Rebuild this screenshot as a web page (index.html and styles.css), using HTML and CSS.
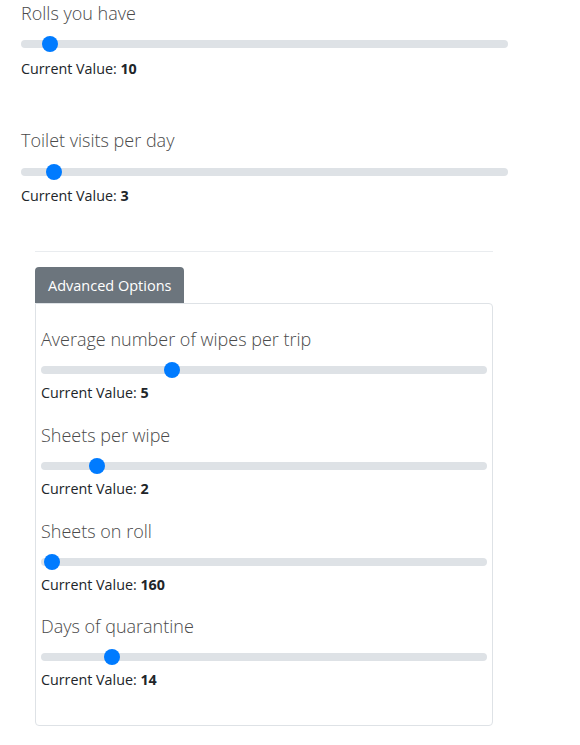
FILE: index.html
```html
<!DOCTYPE html>
<html lang="en">
<head>
<meta charset="utf-8">
<title>Toilet paper calculator</title>
<link rel="stylesheet" href="styles.css">
</head>
<body>
<main class="page">
  <section class="field field-top">
    <label class="field-label" for="rolls">Rolls you have</label>
    <input id="rolls" class="range" type="range" min="1" max="200" value="10">
    <p class="value">Current Value: <strong>10</strong></p>
  </section>
  <section class="field field-top">
    <label class="field-label" for="visits">Toilet visits per day</label>
    <input id="visits" class="range" type="range" min="1" max="39" value="3">
    <p class="value">Current Value: <strong>3</strong></p>
  </section>

  <hr class="divider">

  <div class="advanced">
    <button class="btn-adv" type="button">Advanced Options</button>
    <div class="card">
      <section class="field field-card">
        <label class="field-label" for="wipes">Average number of wipes per trip</label>
        <input id="wipes" class="range" type="range" min="1" max="15" value="5">
        <p class="value">Current Value: <strong>5</strong></p>
      </section>
      <section class="field field-card">
        <label class="field-label" for="sheets">Sheets per wipe</label>
        <input id="sheets" class="range" type="range" min="1" max="10" value="2">
        <p class="value">Current Value: <strong>2</strong></p>
      </section>
      <section class="field field-card">
        <label class="field-label" for="onroll">Sheets on roll</label>
        <input id="onroll" class="range" type="range" min="150" max="1500" value="160">
        <p class="value">Current Value: <strong>160</strong></p>
      </section>
      <section class="field field-card">
        <label class="field-label" for="days">Days of quarantine</label>
        <input id="days" class="range" type="range" min="1" max="90" value="14">
        <p class="value">Current Value: <strong>14</strong></p>
      </section>
    </div>
  </div>
</main>
</body>
</html>
```

FILE: styles.css
```css
html, body {
  margin: 0;
  padding: 0;
  background: #fff;
}

body {
  font-family: "Open Sans", "Noto Sans", "Liberation Sans", sans-serif;
  color: #212529;
}

.page {
  padding: 2px 0 0 21px;
  width: 487px;
}

.field {
  display: flex;
  flex-direction: column;
}

.field-label {
  font-size: 18px;
  font-weight: 300;
  line-height: 23px;
  color: #4a4a4a;
}

.range {
  -webkit-appearance: none;
  appearance: none;
  width: 100%;
  height: 16px;
  margin: 11px 0 0 0;
  padding: 0;
  background: transparent;
}

.range::-webkit-slider-runnable-track {
  height: 8px;
  border-radius: 4px;
  background: #dee2e6;
}

.range::-webkit-slider-thumb {
  -webkit-appearance: none;
  appearance: none;
  width: 16px;
  height: 16px;
  margin-top: -4px;
  border: 0;
  border-radius: 50%;
  background: #007bff;
}

.value {
  margin: 6px 0 0 0;
  font-size: 14.3px;
  line-height: 21px;
}

.value strong {
  font-weight: 700;
}

.field-top + .field-top {
  margin-top: 50px;
}

.field-top + .field-top .range {
  margin-top: 12px;
}

.field-top + .field-top .value {
  margin-top: 5px;
}

.divider {
  margin: 45px 0 0 14px;
  width: 458px;
  border: 0;
  border-top: 1px solid #e9ecef;
}

.advanced {
  margin: 15px 0 0 14px;
  width: 458px;
}

.btn-adv {
  display: block;
  height: 36px;
  padding: 0 13px;
  border: 0;
  border-radius: 4px 4px 0 0;
  background: #6c757d;
  color: #fff;
  font-family: inherit;
  font-size: 14.5px;
}

.card {
  border: 1px solid #dee2e6;
  border-radius: 0 4px 4px 4px;
  padding: 24px 5px 35px 5px;
}

.field-card .value {
  margin-top: 4px;
}

.field-card + .field-card {
  margin-top: 20.8px;
}
```
